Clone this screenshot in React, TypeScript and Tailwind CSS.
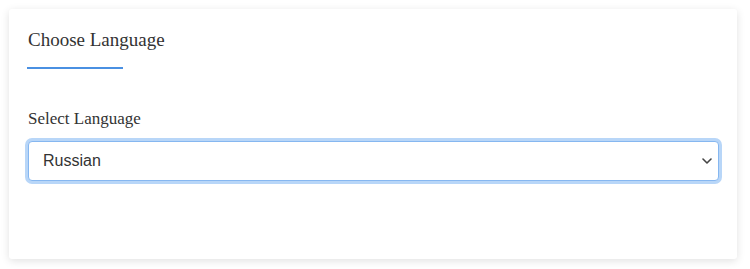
import React from "react";

export default function App() {
  return (
    <div className="w-[750px] h-[269px] bg-white pt-[9px] pl-[9px]">
      <div className="w-[728px] h-[250px] bg-white rounded-[3px] shadow-[0_2px_8px_rgba(0,0,0,0.12)] px-[19px] pt-[20px]">
        <h2 className="text-[19px] leading-[22px] text-[#333] font-['Liberation_Serif',serif] font-normal">
          Choose Language
        </h2>
        <div className="mt-[16px] -ml-[1px] w-[96px] h-[2px] bg-[#4a90e2]" />
        <div className="mt-[40px] text-[17px] leading-[20px] text-[#333] font-['Liberation_Serif',serif]">
          Select Language
        </div>
        <div className="relative mt-[12px] w-[691px]">
          <div className="h-[40px] rounded-[4px] border border-[#86b7f0] ring-[3px] ring-[#b8d6f8] bg-white flex items-center pl-[14px] font-['Liberation_Sans',Arial,sans-serif] text-[16px] text-[#333]">
            Russian
          </div>
          <svg
            className="absolute right-[7px] top-[16px]"
            width="10"
            height="8"
            viewBox="0 0 10 8"
            fill="none"
          >
            <path d="M1 2 L5 6 L9 2" stroke="#444" strokeWidth="1.6" strokeLinecap="round" strokeLinejoin="round" />
          </svg>
        </div>
      </div>
    </div>
  );
}
